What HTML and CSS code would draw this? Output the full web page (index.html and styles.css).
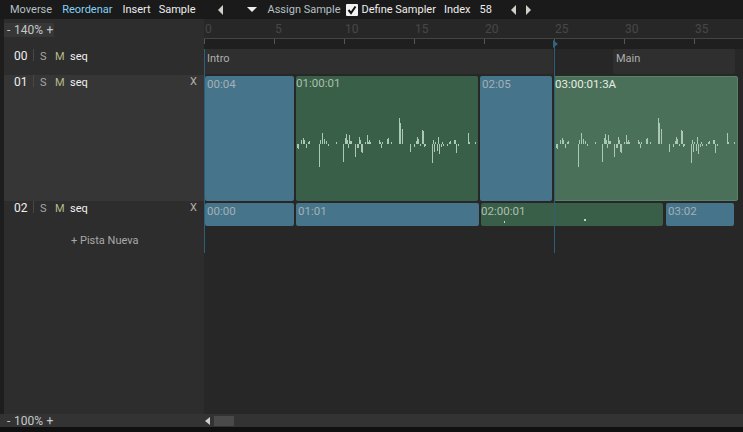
FILE: index.html
```html
<!DOCTYPE html>
<html lang="es">
<head>
<meta charset="utf-8">
<title>Secuenciador</title>
<link rel="stylesheet" href="styles.css">
</head>
<body>
<svg class="defs" width="0" height="0" aria-hidden="true">
  <symbol id="wave" viewBox="0 0 182 52" width="182" height="52">
    <path d="M0 26v4M1 26v5M4 26v-4M6 26v-6M7 26v-4M9 26v4M11 26v-2M12 26v-3M22 26v23M23 26v-4M25 26v-11M27 26v-5M29 26v-3M31 26v2M39 26v-2M46 26v18M48 26v-6M49 26v-10M50 26v-4M51 26v4M52 26v-9M53 26v-3M54 26v-3M58 26v13M60 26v4M61 26v4M62 26v-7M63 26v-4M64 26v8M65 26v9M68 26v-2M70 26v-9M71 26v-2M72 26v-4M73 26v-2M82 26v-4M83 26v-2M84 26v4M85 26v-2M90 26v-5M91 26v-6M94 26v-2M102 26v-26M103 26v-21M105 26v-15M113 26v8M117 26v3M119 26v-3M120 26v-7M121 26v-5M123 26v2M125 26v-14M126 26v-13M127 26v3M128 26v2M135 26v19M136 26v-4M137 26v8M138 26v-2M140 26v7M141 26v-7M142 26v10M144 26v3M145 26v-2M146 26v2M150 26v2M152 26v-2M153 26v-3M157 26v-4M158 26v-4M159 26v9M161 26v2M171 26v-11M172 26v-2M178 26v-2"/>
  </symbol>
</svg>
<header class="toolbar">
  <span class="tool tool-moverse">Moverse</span>
  <span class="tool tool-active tool-reordenar">Reordenar</span>
  <span class="tool tool-white tool-insert">Insert</span>
  <span class="tool tool-white tool-sample">Sample</span>
  <span class="arrow arrow-left arrow-prev"></span>
  <span class="arrow arrow-down"></span>
  <span class="tool tool-assign">Assign Sample</span>
  <span class="check"><svg width="10" height="10" viewBox="0 0 10 10"><path d="M1.5 5l2.500 3L8.500 1.500" fill="none" stroke="#111" stroke-width="2"/></svg></span>
  <span class="tool tool-white tool-define">Define Sampler</span>
  <span class="tool tool-white tool-index">Index</span>
  <span class="tool tool-white tool-num">58</span>
  <span class="arrow arrow-left arrow-idx-l"></span>
  <span class="arrow arrow-right"></span>
</header>
<main class="workspace">
  <aside class="tracks">
    <div class="zoom-row"><span class="zoom-box">- 140% +</span></div>
    <div class="track-head track-head-first">
      <span class="num">00</span><span class="sep"></span><span class="s">S</span><span class="m">M</span><span class="name">seq</span>
    </div>
    <div class="track-head track-head-tall">
      <span class="num">01</span><span class="sep"></span><span class="s">S</span><span class="m">M</span><span class="name">seq</span><span class="x">X</span>
    </div>
    <div class="track-head track-head-third">
      <span class="num">02</span><span class="sep"></span><span class="s">S</span><span class="m">M</span><span class="name">seq</span><span class="x">X</span>
    </div>
    <div class="new-track">+ Pista Nueva</div>
  </aside>
  <section class="timeline">
    <div class="ruler">
      <div class="ruler-labels">
        <span>0</span><span>5</span><span>10</span><span>15</span><span>20</span><span>25</span><span>30</span><span>35</span>
      </div>
      <div class="ruler-ticks">
        <i></i><i></i><i></i><i></i><i></i><i></i><i></i><i></i>
      </div>
    </div>
    <div class="markers">
      <div class="marker marker-intro">Intro</div>
      <div class="marker marker-main">Main</div>
    </div>
    <div class="lane lane-tall">
      <div class="clip blue c1"><span>00:04</span></div>
      <div class="clip green c2"><span>01:00:01</span><svg class="wave" width="182" height="52"><use href="#wave"/></svg></div>
      <div class="clip blue c3"><span>02:05</span></div>
      <div class="clip green selected c4"><span>03:00:01:3A</span><svg class="wave" width="182" height="52"><use href="#wave"/></svg></div>
    </div>
    <div class="lane lane-short">
      <div class="clip blue d1"><span>00:00</span></div>
      <div class="clip blue d2"><span>01:01</span></div>
      <div class="clip green d3"><span>02:00:01</span><i class="dot dot-a"></i><i class="dot dot-b"></i></div>
      <div class="clip blue d4"><span>03:02</span></div>
    </div>
    <div class="rest"></div>
    <div class="edge-line"></div>
    <div class="playhead"></div>
    <div class="playhead-tip"></div>
  </section>
</main>
<footer class="bottom">
  <div class="zoom-bottom">- 100% +</div>
  <div class="scroll"><span class="arrow arrow-left arrow-scroll"></span><span class="thumb"></span></div>
</footer>
</body>
</html>
```
FILE: styles.css
```css
* { box-sizing: border-box; }
html, body { margin: 0; height: 100%; }
body {
  width: 743px; height: 432px; overflow: hidden;
  background: #101010; color: #c8c8c8;
  font: 11px/14px Roboto, sans-serif;
  display: flex; flex-direction: column;
}
.defs { position: absolute; }
.toolbar {
  height: 19px; flex: none; background: #1a1a1a;
  display: flex; align-items: center; padding-left: 10px;
}
.tool { color: #b6c0c4; white-space: nowrap; }
.tool-active { color: #84d0f6; margin-left: 10px; }
.tool-white { color: #eeeeee; }
.tool-insert { margin-left: 10px; }
.tool-sample { margin-left: 8px; }
.arrow { display: block; width: 0; height: 0; flex: none; border-style: solid; border-color: transparent; }
.arrow-left { border-width: 5px 5px 5px 0; border-right-color: #d0d0c8; }
.arrow-right { border-width: 5px 0 5px 5px; border-left-color: #d0d0c8; margin-left: 10px; }
.arrow-down { border-width: 5px 5px 0 5px; border-top-color: #eeeeee; margin-left: 24px; }
.arrow-prev { margin-left: 22px; }
.tool-assign { margin-left: 11px; }
.check {
  width: 12px; height: 12px; margin-left: 5px; background: #f2f2f2;
  border-radius: 1px; display: flex; align-items: center; justify-content: center;
}
.tool-define { margin-left: 4px; }
.tool-index { margin-left: 8px; }
.tool-num { margin-left: 9px; }
.arrow-idx-l { margin-left: 19px; }

.workspace { flex: 1; min-height: 0; display: flex; padding-left: 4px; background: #1d1d1d; }
.tracks { width: 200px; flex: none; background: #2d2d2d; display: flex; flex-direction: column; }
.zoom-row { height: 30px; padding-top: 4px; }
.zoom-box { display: block; width: 50px; height: 14px; background: #373737; padding-left: 3px; color: #c4c8c8; line-height: 14px; font-size: 12px; word-spacing: 0.6px; white-space: nowrap; }
.track-head { display: flex; align-items: flex-start; padding-left: 10px; color: #eee; position: relative; }
.track-head-first { height: 26px; background: #2d2d2d; }
.track-head-tall { height: 126px; background: #363636; }
.track-head-third { height: 26px; }
.num { width: 19px; font-size: 12px; line-height: 14px; }
.sep { width: 1px; height: 12px; background: #474747; margin-right: 6px; }
.s, .m, .name { padding-top: 1px; }
.s { width: 15px; color: #a8a8a8; }
.m { width: 15px; color: #b8b88a; }
.name { color: #f0f0f0; font-size: 11px; }
.x { position: absolute; right: 7px; top: 0; color: #b0b0b0; }
.new-track { padding-left: 67px; margin-top: 7px; color: #a9a9a9; }

.timeline { flex: 1; min-width: 0; position: relative; background: #272727; display: flex; flex-direction: column; overflow: hidden; }
.ruler { height: 30px; flex: none; background: #1f1f1f; }
.ruler-labels { height: 19px; background: #272727; display: flex; padding-left: 1px; color: #474747; font-size: 12px; line-height: 20px; border-bottom: 1px solid #444; box-sizing: content-box; }
.ruler-labels span { width: 70px; flex: none; }
.ruler-ticks { display: flex; height: 5px; }
.ruler-ticks i { width: 70px; flex: none; border-left: 1px solid #555; }
.markers { height: 26px; flex: none; display: flex; background: #272727; }
.marker { height: 25px; background: #2f2f2f; color: #aeaeae; padding: 3px 0 0 3px; flex: none; }
.marker-intro { width: 349px; }
.marker-main { width: 122px; margin-left: 60px; padding-left: 3px; border-radius: 2px; }
.lane { position: relative; flex: none; }
.lane-tall { height: 126px; }
.lane-short { height: 26px; }
.rest { flex: 1; }
.clip { position: absolute; border-radius: 2px; color: #a3b0b5; overflow: hidden; padding-left: 2px; font-size: 11.5px; line-height: 14px; }
.clip span { display: block; }
.blue { background: #46748a; }
.green { background: #3a5f49; color: #adbfae; padding-left: 0; }
.selected { background: #4a7059; color: #e6eee4; border: 1px solid #5b8169; padding-left: 0; }
.lane-tall .clip { top: 1px; height: 125px; }
.lane-tall .blue span { margin-top: 1px; }
.lane-short .clip { top: 2px; height: 23px; }
.lane-short .clip span { margin-top: 1px; }
.c1 { left: 1px; width: 89px; }
.c2 { left: 92px; width: 182px; }
.c3 { left: 276px; width: 72px; }
.c4 { left: 350px; width: 184px; }
.d1 { left: 1px; width: 89px; }
.d2 { left: 92px; width: 183px; }
.d3 { left: 277px; width: 182px; }
.d4 { left: 462px; width: 68px; }
.wave { position: absolute; left: 1px; top: 42px; stroke: #a9c9b4; stroke-width: 1; fill: none; shape-rendering: crispEdges; }
.c4 .wave { left: 1px; top: 41px; }
.dot { position: absolute; background: #c8d4c8; }
.dot-a { left: 23px; top: 18px; width: 1px; height: 2px; }
.dot-b { left: 103px; top: 16px; width: 2px; height: 2px; }
.edge-line { position: absolute; left: 0; top: 30px; width: 1px; height: 204px; background: #2f5f78; }
.playhead { position: absolute; left: 350px; top: 21px; width: 1px; height: 213px; background: #2f5f78; }
.playhead-tip { position: absolute; left: 349px; top: 21px; width: 0; height: 0; border-style: solid; border-width: 4px 0 4px 5px; border-color: transparent transparent transparent #34637e; }

.bottom { height: 13px; flex: none; margin-bottom: 5px; display: flex; padding-left: 4px; background: #333; }
.zoom-bottom { width: 200px; flex: none; padding-left: 3px; color: #c4c8c8; font-size: 12px; line-height: 14px; word-spacing: 0.6px; }
.scroll { flex: 1; display: flex; align-items: center; padding-left: 1px; }
.arrow-scroll { border-width: 4px 5px 4px 0; }
.thumb { width: 20px; height: 10px; margin-left: 4px; background: #4a4a4a; }
```
